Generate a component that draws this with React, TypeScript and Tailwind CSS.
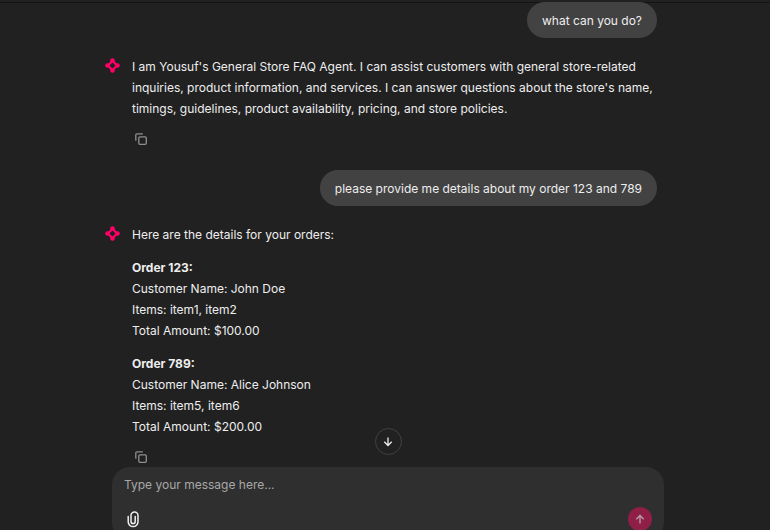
import type { ReactNode } from "react";

function AgentLogo() {
  return (
    <svg viewBox="0 0 15 15" className="mt-[2px] size-[15px] shrink-0" role="img" aria-label="Agent">
      <path d="M7.5 2.900 12.100 7.500 7.500 12.100 2.900 7.500Z" fill="none" stroke="#ff0066" strokeWidth="2.200" strokeLinejoin="round" />
      <g fill="#ff0066">
        <circle cx="7.5" cy="2.500" r="2.300" />
        <circle cx="7.5" cy="12.500" r="2.300" />
        <circle cx="2.500" cy="7.500" r="2.300" />
        <circle cx="12.500" cy="7.500" r="2.300" />
      </g>
    </svg>
  );
}

function CopyIcon() {
  return (
    <svg viewBox="0 0 12 12" className="size-3" fill="none" stroke="currentColor" strokeWidth="1.300" aria-hidden="true">
      <rect x="3.800" y="3.800" width="7.500" height="7.500" rx="1.200" />
      <path d="M.8 7.800V2A1.200 1.200 0 0 1 2 .8h5.800" />
    </svg>
  );
}

function ArrowIcon({ className }: { className: string }) {
  return (
    <svg viewBox="0 0 12 12" className={className} fill="none" stroke="currentColor" strokeWidth="1.300" aria-hidden="true">
      <path d="M6 1.500v8M2.300 5.800 6 9.500l3.700-3.700" />
    </svg>
  );
}

function AttachIcon() {
  return (
    <svg viewBox="0 0 18 18" className="size-[18px]" fill="none" stroke="currentColor" strokeWidth="1.500" strokeLinecap="round" aria-hidden="true">
      <path d="M4.200 6.500v5.200a4.900 4.900 0 0 0 9.800 0V5.600a3.500 3.500 0 0 0-7 0v5.900a2.100 2.100 0 0 0 4.200 0V6.500" />
    </svg>
  );
}

function UserMessage({ children }: { children: ReactNode }) {
  return (
    <div className="flex justify-end">
      <p className="rounded-[18px] bg-[#424242] px-[15px] pt-2 pb-[7px]">{children}</p>
    </div>
  );
}

function AgentMessage({ children }: { children: ReactNode }) {
  return (
    <article className="flex gap-3">
      <AgentLogo />
      <div className="min-w-0 flex-1">
        <div className="flex flex-col gap-3">{children}</div>
        <button type="button" aria-label="Copy message" className="mt-2 flex h-6 w-[18px] items-center justify-center text-[#8f8f8f]">
          <CopyIcon />
        </button>
      </div>
    </article>
  );
}

type Order = { id: string; customer: string; items: string; total: string };

const orders: Order[] = [
  { id: "123", customer: "John Doe", items: "item1, item2", total: "$100.00" },
  { id: "789", customer: "Alice Johnson", items: "item5, item6", total: "$200.00" },
];

export default function App() {
  return (
    <div className="flex h-screen flex-col overflow-hidden bg-[#212121] font-['Inter',sans-serif] text-[12px] leading-[21px] text-[#eeeeee]">
      <header className="h-[3px] shrink-0 border-b border-[#141414]" />
      <main className="-mt-px min-h-0 flex-1 pr-[113px] pl-[105px]">
        <UserMessage>what can you do?</UserMessage>
        <div className="my-[18px]">
          <AgentMessage>
            <p>
              I am Yousuf's General Store FAQ Agent. I can assist customers with general store-related inquiries,
              product information, and services. I can answer questions about the store's name, timings, guidelines,
              product availability, pricing, and store policies.
            </p>
          </AgentMessage>
        </div>
        <div className="pt-px">
          <UserMessage>please provide me details about my order 123 and 789</UserMessage>
        </div>
        <div className="mt-[18px]">
          <AgentMessage>
            <p>Here are the details for your orders:</p>
            {orders.map((order) => (
              <p key={order.id}>
                <strong className="font-bold">Order {order.id}:</strong>
                <br />
                Customer Name: {order.customer}
                <br />
                Items: {order.items}
                <br />
                Total Amount: {order.total}
              </p>
            ))}
          </AgentMessage>
        </div>
      </main>
      <footer className="relative -mb-[10px] shrink-0 pr-[106px] pl-[112px]">
        <div className="absolute inset-x-0 bottom-full mb-3 flex justify-center pl-[6px]">
          <button
            type="button"
            aria-label="Scroll to bottom"
            className="flex size-[27px] items-center justify-center rounded-full border border-[#424242] bg-[#212121]"
          >
            <ArrowIcon className="size-3" />
          </button>
        </div>
        <form className="rounded-[18px] bg-[#2f2f2f] px-3 pt-2 pb-[9px]" onSubmit={(e) => e.preventDefault()}>
          <input
            type="text"
            aria-label="Message"
            placeholder="Type your message here..."
            className="block h-[18px] w-full bg-transparent outline-none placeholder:text-[#a8a8a8]"
          />
          <div className="mt-[14px] flex items-center justify-between">
            <button type="button" aria-label="Attach files" className="flex size-[18px] items-center justify-center">
              <AttachIcon />
            </button>
            <button
              type="submit"
              aria-label="Send message"
              className="flex size-6 items-center justify-center rounded-full bg-[#901f47] text-[#b5a0aa]"
            >
              <ArrowIcon className="size-3 rotate-180" />
            </button>
          </div>
        </form>
      </footer>
    </div>
  );
}
